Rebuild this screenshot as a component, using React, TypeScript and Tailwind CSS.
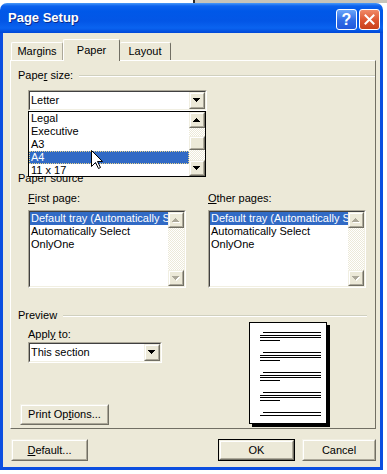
import React from "react";

const font = "font-['Liberation_Sans',Arial,sans-serif]";
const checker =
  "bg-[image:repeating-conic-gradient(#ffffff_0%_25%,#ece9d8_0%_50%)] bg-[length:2px_2px]";

function Tri({ up = false, disabled = false }: { up?: boolean; disabled?: boolean }) {
  const rows = up ? [1, 3, 5, 7] : [7, 5, 3, 1];
  return (
    <svg width="8" height="5" viewBox="0 0 8 5" shapeRendering="crispEdges">
      {disabled &&
        rows.map((w, i) => (
          <rect key={"s" + i} x={(7 - w) / 2 + 1} y={i + 1} width={w} height={1} fill="#ffffff" />
        ))}
      {rows.map((w, i) => (
        <rect key={i} x={(7 - w) / 2} y={i} width={w} height={1} fill={disabled ? "#aca899" : "#000000"} />
      ))}
    </svg>
  );
}

function Raised({ className = "", children }: { className?: string; children?: React.ReactNode }) {
  return (
    <div
      className={`border border-t-[#f1efe2] border-l-[#f1efe2] border-r-[#716f64] border-b-[#716f64] bg-[#ece9d8] ${className}`}
    >
      <div className="flex h-full w-full items-center justify-center border border-t-white border-l-white border-r-[#aca899] border-b-[#aca899]">
        {children}
      </div>
    </div>
  );
}

function Sunken({ className = "", children }: { className?: string; children?: React.ReactNode }) {
  return (
    <div
      className={`border border-t-[#aca899] border-l-[#aca899] border-r-white border-b-white ${className}`}
    >
      <div className="flex h-full w-full border border-t-[#404040] border-l-[#404040] border-r-[#f1efe2] border-b-[#f1efe2] bg-white">
        {children}
      </div>
    </div>
  );
}

function Combo({ width, text }: { width: string; text: string }) {
  return (
    <Sunken className={`h-[21px] ${width}`}>
      <div className="flex flex-1 items-center pl-[1px]">{text}</div>
      <Raised className="h-full w-[16px]">
        <Tri />
      </Raised>
    </Sunken>
  );
}

function GroupLabel({ className = "", children }: { className?: string; children: React.ReactNode }) {
  return (
    <div className={`flex h-[13px] items-center ${className}`}>
      <span>{children}</span>
      <div className="ml-[6px] h-[2px] flex-1 border-t border-b border-t-[#d0d0bf] border-b-white" />
    </div>
  );
}

function SourceList({ label }: { label: React.ReactNode }) {
  return (
    <div className="flex w-[158px] flex-col">
      <div className="h-[13px]">{label}</div>
      <Sunken className="mt-[5px] h-[78px] w-[158px]">
        <div className="flex flex-1 flex-col overflow-hidden whitespace-nowrap">
          <div className="h-[13px] bg-[#316ac5] pl-[1px] text-white">Default tray (Automatically Select)</div>
          <div className="h-[13px] pl-[1px]">Automatically Select</div>
          <div className="h-[13px] pl-[1px]">OnlyOne</div>
        </div>
        <div className="flex w-[16px] flex-col">
          <Raised className="h-[16px] w-[16px]">
            <Tri up disabled />
          </Raised>
          <div className={`flex-1 ${checker}`} />
          <Raised className="h-[16px] w-[16px]">
            <Tri disabled />
          </Raised>
        </div>
      </Sunken>
    </div>
  );
}

function PageLines({ count = 4 }: { count?: number }) {
  const lines = [
    "ml-[3px] w-[58px]",
    "mt-[2px] w-[61px]",
    "mt-[1px] w-[61px]",
    "mt-[2px] w-[20px]",
  ].slice(0, count);
  return (
    <div className="flex flex-col">
      {lines.map((c, i) => (
        <div key={i} className={`h-px bg-black ${c}`} />
      ))}
    </div>
  );
}

export default function App() {
  return (
    <div className={`relative h-[474px] w-[387px] overflow-hidden bg-white text-[11px] leading-[13px] text-black ${font}`}>
      <div className="flex h-[3px]">
        <div className="w-[193px] bg-white" />
        <div className="w-[2px] bg-[#2a2a2a]" />
        <div className="flex-1 bg-[#c7c4b9]" />
      </div>
      <div className="flex">
        <div className="flex h-[467px] w-[383px] flex-col">
          {/* title bar */}
          <div className="flex h-[30px] items-start rounded-t-[7px] bg-[image:linear-gradient(to_bottom,#4a9af8_0px,#0c62ee_3px,#0058e8_8px,#0356e6_18px,#0a63f0_25px,#0048d8_30px)] pl-[8px] pr-[3px]">
            <div className="mt-[7px] text-[13px] font-bold leading-[16px] text-white [text-shadow:1px_1px_0_#0a2a8a]">
              Page Setup
            </div>
            <div className="ml-auto mt-[6px] flex gap-[2px]">
              <div className="flex h-[21px] w-[21px] items-center justify-center rounded-[3px] border border-white bg-[image:linear-gradient(to_bottom,#6aa6fa,#2f6be6_55%,#2158dc)] text-[16px] font-bold leading-[16px] text-white">
                ?
              </div>
              <div className="flex h-[21px] w-[21px] items-center justify-center rounded-[3px] border border-white bg-[image:linear-gradient(to_bottom,#f08a68,#dd5530_55%,#c8401c)]">
                <svg width="11" height="11" viewBox="0 0 11 11">
                  <path d="M1.5 1.5 L9.5 9.5 M9.5 1.5 L1.5 9.5" stroke="#ffffff" strokeWidth="2" strokeLinecap="square" />
                </svg>
              </div>
            </div>
          </div>

          {/* frame */}
          <div className="flex flex-1 flex-col bg-[#0b4ee0] px-[3px] pb-[3px]">
            <div className="flex flex-1 flex-col bg-[#ece9d8] pl-[7px] pr-[4px] pt-[6px]">
              {/* tabs */}
              <div className="flex h-[21px] items-end pl-[1px]">
                <div className="flex h-[18px] w-[52px] items-center justify-center rounded-t-[2px] border-l border-t border-r border-l-white border-t-white border-r-[#aca899]">
                  Margins
                </div>
                <div className="relative z-10 -mb-px flex h-[22px] w-[57px] items-start justify-center rounded-t-[2px] border-l border-t border-r border-l-white border-t-white border-r-[#716f64] bg-[#ece9d8] pt-[4px]">
                  Paper
                </div>
                <div className="flex h-[18px] w-[51px] items-center justify-center rounded-t-[2px] border-t border-r border-t-white border-r-[#716f64]">
                  Layout
                </div>
              </div>

              {/* panel */}
              <div className="flex h-[369px] flex-col border border-t-white border-l-white border-r-[#716f64] border-b-[#716f64] pl-[7px] pt-[8px]">
                <GroupLabel>
                  Pape<span className="underline">r</span> size:
                </GroupLabel>

                <div className="relative z-20 ml-[10px] mt-[8px] w-[179px]">
                  <Combo width="w-[179px]" text="Letter" />
                  <div className="absolute left-0 top-[21px] flex h-[66px] w-[178px] border border-black bg-white">
                    <div className="flex flex-1 flex-col">
                      <div className="h-[13px] pl-[2px]">Legal</div>
                      <div className="h-[13px] pl-[2px]">Executive</div>
                      <div className="h-[13px] pl-[2px]">A3</div>
                      <div className="h-[13px] border border-dotted border-[#e8d48c] bg-[#316ac5] pl-[1px] leading-[11px] text-white">
                        A4
                      </div>
                      <div className="h-[13px] pl-[2px]">11 x 17</div>
                    </div>
                    <div className="flex w-[16px] flex-col">
                      <Raised className="h-[16px] w-[16px]">
                        <Tri up />
                      </Raised>
                      <div className={`h-[8px] ${checker}`} />
                      <Raised className="h-[14px] w-[16px]" />
                      <div className={`flex-1 ${checker}`} />
                      <Raised className="h-[16px] w-[16px]">
                        <Tri />
                      </Raised>
                    </div>
                  </div>
                  {/* mouse pointer */}
                  <svg className="absolute left-[63px] top-[60px] z-30" width="13" height="20" viewBox="0 0 13 20">
                    <path
                      d="M0.5 0.5 L0.5 16.5 L4.5 12.5 L7.5 18.5 L9.5 17.5 L6.5 11.5 L11.5 11.5 Z"
                      fill="#ffffff"
                      stroke="#000000"
                      strokeWidth="1"
                      strokeLinejoin="miter"
                    />
                  </svg>
                </div>

                <div className="mt-[61px] h-[13px]">Paper source</div>

                <div className="ml-[10px] mt-[7px] flex gap-[22px]">
                  <SourceList
                    label={
                      <>
                        <span className="underline">F</span>irst page:
                      </>
                    }
                  />
                  <SourceList
                    label={
                      <>
                        <span className="underline">O</span>ther pages:
                      </>
                    }
                  />
                </div>

                <GroupLabel className="mr-[8px] mt-[21px]">Preview</GroupLabel>

                <div className="flex">
                  <div className="flex w-[231px] flex-col">
                    <div className="ml-[10px] mt-[6px] h-[13px]">
                      Appl<span className="underline">y</span> to:
                    </div>
                    <div className="ml-[10px] mt-[1px]">
                      <Combo width="w-[134px]" text="This section" />
                    </div>
                    <Raised className="ml-[2px] mt-[41px] h-[21px] w-[89px]">
                      <span>
                        Print Op<span className="underline">t</span>ions...
                      </span>
                    </Raised>
                  </div>
                  <div className="flex h-[102px] w-[78px] flex-col gap-[11px] overflow-hidden border border-black bg-white pl-[10px] pt-[9px] shadow-[3px_3px_0_#000]">
                    <PageLines />
                    <PageLines />
                    <PageLines />
                    <PageLines />
                    <PageLines count={2} />
                  </div>
                </div>
              </div>

              {/* buttons */}
              <div className="mt-[10px] flex pl-[1px]">
                <Raised className="h-[22px] w-[77px]">
                  <span>
                    <span className="underline">D</span>efault...
                  </span>
                </Raised>
                <div className="ml-auto h-[22px] w-[77px] border border-black">
                  <Raised className="h-full w-full">OK</Raised>
                </div>
                <Raised className="ml-[7px] h-[22px] w-[74px]">Cancel</Raised>
              </div>
            </div>
          </div>
        </div>
        <div className="flex-1 bg-white" />
      </div>
    </div>
  );
}
